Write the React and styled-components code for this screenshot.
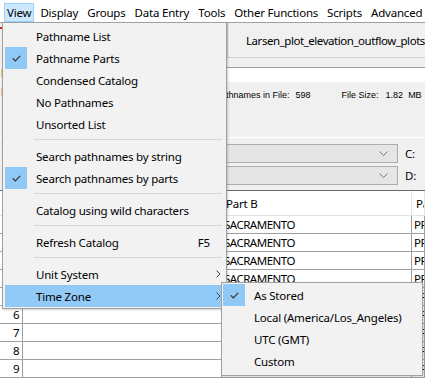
import styled, { createGlobalStyle } from "styled-components";

const GlobalStyle = createGlobalStyle`
  html, body {
    margin: 0;
    padding: 0;
    background: #f0f0f0;
    overflow: hidden;
  }
`;

const menuBarItems = ["View", "Display", "Groups", "Data Entry", "Tools", "Other Functions", "Scripts", "Advanced"];

const viewMenu = [
    { label: "Pathname List" },
    { label: "Pathname Parts", checked: true },
    { label: "Condensed Catalog" },
    { label: "No Pathnames" },
    { label: "Unsorted List" },
    { sep: true },
    { label: "Search pathnames by string" },
    { label: "Search pathnames by parts", checked: true },
    { sep: true },
    { label: "Catalog using wild characters" },
    { sep: true },
    { label: "Refresh Catalog", shortcut: "F5" },
    { sep: true },
    { label: "Unit System", sub: true },
    { label: "Time Zone", sub: true, hot: true },
];

const timeZoneMenu = [
    { label: "As Stored", checked: true },
    { label: "Local (America/Los_Angeles)" },
    { label: "UTC (GMT)" },
    { label: "Custom" },
];

const rows = [1, 2, 3, 4, 5, 6, 7, 8, 9];

const Check = () => (
    <svg width="9" height="7" viewBox="0 0 9 7">
        <path d="M0.8 3.3 L3.3 5.8 L8.2 0.8" fill="none" stroke="#333" strokeWidth="1.2" />
    </svg>
);

const Arrow = () => (
    <svg width="5" height="8" viewBox="0 0 5 8">
        <path d="M0.5 0.5 L4 4 L0.5 7.5" fill="none" stroke="#444" strokeWidth="1" />
    </svg>
);

const Chevron = () => (
    <svg width="9" height="5" viewBox="0 0 9 5">
        <path d="M0.5 0.5 L4.5 4.5 L8.5 0.5" fill="none" stroke="#777" strokeWidth="1" />
    </svg>
);

const MenuList = ({ items }) => (
    <>
        {items.map((item, idx) => {
            if (item.sep) {
                return <Separator key={idx} />;
            }
            return (
                <Item key={idx} $hot={item.hot}>
                    <CheckCell $checked={item.checked}>
                        {item.checked && <Check />}
                    </CheckCell>
                    <ItemLabel>{item.label}</ItemLabel>
                    <Shortcut>{item.shortcut}</Shortcut>
                    <ArrowCell>{item.sub && <Arrow />}</ArrowCell>
                </Item>
            );
        })}
    </>
);

const App = () => {
    return (
        <Root>
            <GlobalStyle />
            <MenuBar>
                {menuBarItems.map((name, idx) => (
                    <BarItem key={name} $active={idx === 0}>{name}</BarItem>
                ))}
            </MenuBar>

            <TopSection>
                <LeftPanel>
                    <RedMark />
                    <LeftLabel $top={32}>DSS File Version</LeftLabel>
                    <LeftLabel $top={0}>Database Name</LeftLabel>
                </LeftPanel>
                <RightPanel>
                    <TitleBox>Larsen_plot_elevation_outflow_plots</TitleBox>
                    <PathField />
                    <InfoRow>
                        <InfoText>Pathnames in File:</InfoText>
                        <InfoText $gap={6}>598</InfoText>
                        <InfoText $gap={31}>File Size:</InfoText>
                        <InfoText $gap={7}>1.82</InfoText>
                        <InfoText $gap={5}>MB</InfoText>
                    </InfoRow>
                </RightPanel>
            </TopSection>

            <ComboSection>
                <ComboRow>
                    <Combo><Chevron /></Combo>
                    <ComboLabel>C:</ComboLabel>
                </ComboRow>
                <ComboRow>
                    <Combo><Chevron /></Combo>
                    <ComboLabel>D:</ComboLabel>
                </ComboRow>
            </ComboSection>

            <Table>
                <HeaderRow>
                    <HeadCell />
                    <HeadCell>Part A</HeadCell>
                    <HeadCell>Part B</HeadCell>
                    <HeadCell>Part C</HeadCell>
                </HeaderRow>
                {rows.map((n) => (
                    <Row key={n}>
                        <NumCell>{n}</NumCell>
                        <Cell />
                        <Cell>SACRAMENTO</Cell>
                        <Cell>PRECIP-INC</Cell>
                    </Row>
                ))}
            </Table>

            <Dropdown>
                <MenuList items={viewMenu} />
            </Dropdown>
            <SubMenu>
                <MenuList items={timeZoneMenu} />
            </SubMenu>
        </Root>
    );
}

export default App;

const Root = styled.div`
  width: 425px;
  height: 378px;
  position: relative;
  overflow: hidden;
  background: #f0f0f0;
  font-family: "Noto Sans", "DejaVu Sans", sans-serif;
  font-size: 11.5px;
  letter-spacing: -0.2px;
  color: #000;
`;

const MenuBar = styled.div`
  height: 23px;
  box-sizing: border-box;
  display: flex;
  align-items: flex-start;
  gap: 3px;
  padding: 3px 0 0 4px;
  background: #fff;
  border-bottom: 1px solid #a0a0a0;
  white-space: nowrap;
`;

const BarItem = styled.div`
  height: 19px;
  box-sizing: border-box;
  display: flex;
  align-items: center;
  padding: 0 2px;
  border: 1px solid ${(p) => (p.$active ? "#99d1ff" : "transparent")};
  background: ${(p) => (p.$active ? "#cce8ff" : "transparent")};
`;

const TopSection = styled.div`
  display: grid;
  grid-template-columns: 227px 1fr;
  height: 115px;
  box-sizing: border-box;
  border-bottom: 1px solid #fff;
`;

const LeftPanel = styled.div`
  display: flex;
  flex-direction: column;
  gap: 6px;
  padding: 4px 0 0 0;
  overflow: hidden;
`;

const RedMark = styled.div`
  width: 14px;
  height: 2px;
  background: #e02020;
`;

const LeftLabel = styled.div`
  font-family: "Liberation Sans", Arial, sans-serif;
  font-size: 11px;
  line-height: 13px;
  margin-top: ${(p) => p.$top}px;
  margin-left: 1px;
  white-space: nowrap;
`;

const RightPanel = styled.div`
  display: flex;
  flex-direction: column;
  min-width: 0;
`;

const TitleBox = styled.div`
  height: 35px;
  box-sizing: border-box;
  padding: 10px 0 0 18px;
  letter-spacing: -0.45px;
  border-left: 1px solid #d0d0d0;
  border-bottom: 1px solid #d0d0d0;
  white-space: nowrap;
  overflow: hidden;
`;

const PathField = styled.div`
  height: 14px;
  margin-top: 9px;
  background: #fff;
  border-top: 1px solid #a0a0a0;
`;

const InfoRow = styled.div`
  display: flex;
  align-items: center;
  height: 11px;
  margin: 7px 0 0 -12px;
  white-space: nowrap;
`;

const InfoText = styled.span`
  font-family: "Liberation Sans", Arial, sans-serif;
  font-size: 9px;
  letter-spacing: 0;
  margin-left: ${(p) => p.$gap || 0}px;
`;

const ComboSection = styled.div`
  height: 52px;
  box-sizing: border-box;
  padding: 6px 0 0 0;
  display: flex;
  flex-direction: column;
  gap: 3px;
`;

const ComboRow = styled.div`
  display: grid;
  grid-template-columns: 1fr 27px;
  align-items: center;
`;

const Combo = styled.div`
  height: 19px;
  margin-left: 6px;
  box-sizing: border-box;
  display: flex;
  align-items: center;
  justify-content: flex-end;
  padding-right: 9px;
  background: #e5e5e5;
  border: 1px solid #adadad;
`;

const ComboLabel = styled.div`
  padding-left: 7px;
`;

const Table = styled.div`
  background: #fff;
  border-top: 1px solid #6a6a6a;
`;

const HeaderRow = styled.div`
  display: grid;
  grid-template-columns: 23px 199px 190px 1fr;
  height: 25px;
  box-sizing: border-box;
  border-bottom: 1px solid #e3e3e3;
`;

const HeadCell = styled.div`
  display: flex;
  align-items: center;
  padding-left: 4px;
  border-right: 1px solid #e3e3e3;
  white-space: nowrap;
  overflow: hidden;
`;

const Row = styled.div`
  display: grid;
  grid-template-columns: 23px 199px 190px 1fr;
  height: 18px;
  box-sizing: border-box;
  border-bottom: 1px solid #a0a0a0;
`;

const Cell = styled.div`
  display: flex;
  align-items: center;
  padding-left: 2px;
  letter-spacing: -0.5px;
  border-right: 1px solid #a0a0a0;
  white-space: nowrap;
  overflow: hidden;
`;

const NumCell = styled(Cell)`
  justify-content: flex-end;
  padding: 0 3px 0 0;
`;

const Dropdown = styled.div`
  position: absolute;
  left: 2px;
  top: 22px;
  width: 225px;
  box-sizing: border-box;
  padding: 2px 2px 1px;
  background: #f2f2f2;
  border: 1px solid #a0a0a0;
  box-shadow: 1px 1px 2px rgba(0, 0, 0, 0.18);
`;

const SubMenu = styled(Dropdown)`
  left: 221px;
  top: 282px;
  width: 202px;
  padding: 1px 1px 3px;
`;

const Item = styled.div`
  display: grid;
  grid-template-columns: 22px 1fr auto 14px;
  align-items: center;
  height: 22px;
  background: ${(p) => (p.$hot ? "#91c9f7" : "transparent")};
  white-space: nowrap;
`;

const CheckCell = styled.div`
  height: 22px;
  display: flex;
  align-items: center;
  justify-content: center;
  background: ${(p) => (p.$checked ? "#90c8f6" : "transparent")};
`;

const ItemLabel = styled.div`
  padding-left: 9px;
`;

const Shortcut = styled.div``;

const ArrowCell = styled.div`
  display: flex;
  align-items: center;
  justify-content: center;
  padding-left: 2px;
`;

const Separator = styled.div`
  height: 10px;
  box-sizing: border-box;
  margin: 0 2px 0 29px;
  padding-top: 4px;

  &::after {
    content: "";
    display: block;
    height: 1px;
    background: #d7d7d7;
  }
`;
